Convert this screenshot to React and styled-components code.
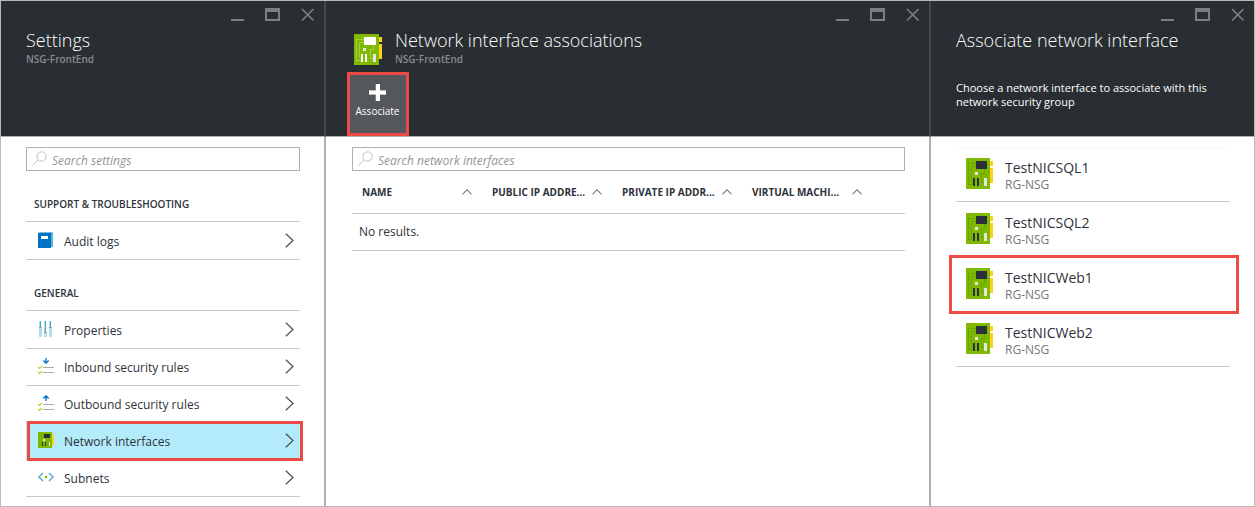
import React from "react";
import styled, { createGlobalStyle } from "styled-components";

const GlobalStyle = createGlobalStyle`
  *, *::before, *::after { box-sizing: border-box; }
  body {
    margin: 0;
    background: #fff;
    color: #2e323a;
    font-family: "Open Sans", "Noto Sans", sans-serif;
    font-size: 12px;
  }
  button, input { font: inherit; color: inherit; }
  ul, h1, h2, p { margin: 0; padding: 0; }
  ul { list-style: none; }
`;

const Portal = styled.main`
  display: grid;
  grid-template-columns: 325fr 605fr 323fr;
  min-height: 100vh;
  border: 1px solid #b8b9ba;
`;

const Blade = styled.section`
  min-width: 0;
  display: flex;
  flex-direction: column;
  border-right: ${(p) => (p.$last ? "0" : "2px solid #b0b0b0")};
`;

const BladeHeader = styled.header`
  height: 136px;
  padding-top: 7px;
  background: #292e32;
  color: #fff;
  border-bottom: 1px solid #b0b0b0;
  margin-right: ${(p) => (p.$last ? "0" : "-2px")};
  border-right: ${(p) => (p.$last ? "0" : "2px solid #42474b")};
`;

const WindowControls = styled.div`
  display: flex;
  justify-content: flex-end;
  gap: 20px;
  padding-right: 9px;
  height: 14px;
`;

const ControlButton = styled.button`
  width: 15px;
  height: 14px;
  padding: 0;
  border: 0;
  background: none;
  color: #7b7f82;
  svg { display: block; }
`;

const TitleRow = styled.div`
  display: flex;
  gap: 13px;
  margin-top: 7px;
  padding-left: ${(p) => (p.$icon ? "28px" : "25px")};
  svg { margin-top: 5px; }
`;

const Title = styled.h1`
  font-size: 18px;
  line-height: 22px;
  font-weight: 300;
  white-space: nowrap;
`;

const Subtitle = styled.p`
  height: 15px;
  font-size: 10px;
  line-height: 16px;
  font-weight: 600;
  color: #898c8e;
`;

const Description = styled.p`
  margin: 15px 40px 0 25px;
  font-size: 11px;
  line-height: 14px;
`;

const CommandButton = styled.button`
  display: flex;
  flex-direction: column;
  align-items: center;
  width: 62px;
  height: 64px;
  margin: 6px 0 0 21px;
  padding: 9px 1px 0 0;
  border: 3px solid #ed4a45;
  background: #54575c;
  font-size: 10px;
  line-height: 14px;
  color: #fff;
  gap: 3px;
`;

const BladeBody = styled.div`
  padding: 10px 24px 0 ${(p) => (p.$wide ? "26px" : "25px")};
`;

const SearchBox = styled.label`
  display: flex;
  align-items: center;
  gap: 5px;
  height: 24px;
  padding: 0 5px;
  border: 1px solid #b0b0b0;
  svg { flex: none; margin-bottom: 2px; }
`;

const SearchInput = styled.input`
  flex: 1;
  min-width: 0;
  height: 22px;
  padding: 3px 0 0;
  border: 0;
  outline: 0;
  background: none;
  font-size: 12px;
  font-style: italic;
  &::placeholder { color: #929598; opacity: 1; }
`;

const GroupTitle = styled.h2`
  height: 51px;
  padding: 25px 8px 0;
  border-bottom: 1px solid #c8c8c8;
  font-size: 10px;
  line-height: 16px;
  font-weight: 600;
`;

const SettingList = styled.ul`
  padding-top: 1px;
`;

const SettingItem = styled.li`
  position: relative;
  border-bottom: 1px solid #c8c8c8;
  background: ${(p) => (p.$selected ? "#b3ebfb" : "none")};
`;

const SettingLink = styled.a`
  display: grid;
  grid-template-columns: 16px 1fr 9px;
  align-items: center;
  column-gap: 10px;
  height: 36px;
  padding: 0 6px 2px 12px;
  color: inherit;
  text-decoration: none;
  span { padding-top: 3px; }
`;

const Highlight = styled.div`
  position: absolute;
  inset: ${(p) => p.$inset};
  border: 3px solid #ed4a45;
  pointer-events: none;
`;

const Table = styled.table`
  width: 100%;
  table-layout: fixed;
  border-collapse: collapse;
`;

const HeadCell = styled.th`
  width: ${(p) => (p.$filler ? "auto" : "130px")};
  height: 42px;
  padding: 0;
  border-bottom: 1px solid #c8c8c8;
`;

const SortButton = styled.button`
  display: flex;
  justify-content: space-between;
  align-items: center;
  width: 100%;
  padding: 0 10px;
  border: 0;
  background: none;
  font-size: 10px;
  line-height: 14px;
  font-weight: 700;
  white-space: nowrap;
`;

const EmptyCell = styled.td`
  height: 37px;
  padding: 0 7px;
  border-bottom: 1px solid #c8c8c8;
`;

const NicList = styled.ul`
  box-shadow: inset 0 1px #f7f7f7;
`;

const NicItem = styled.li`
  position: relative;
  border-bottom: 1px solid #c8c8c8;
`;

const NicButton = styled.button`
  display: flex;
  gap: 12px;
  width: 100%;
  height: 54px;
  padding: 11px 10px 0;
  border: 0;
  background: none;
  text-align: left;
`;

const NicName = styled.span`
  display: block;
  font-size: 14px;
  line-height: 19px;
`;

const NicGroup = styled.span`
  display: block;
  font-size: 12px;
  line-height: 16px;
  color: #74777b;
`;

function NicIcon({ width = 27, height = 31, chip = "#2b313a", trace = "#6ca300" }) {
  return (
    <svg width={width} height={height} viewBox="0 0 27 31" preserveAspectRatio="none" aria-hidden="true" shapeRendering="crispEdges">
      <path fill="#7fba00" d="M0 0h24v31H0z" />
      <path fill="none" stroke={trace} d="M10 5.5H2.500V26.500H7M10 8.500H5.500V23.500H7M18.500 11V15.500H15.500V24.500H18" />
      <path fill="#fcd116" d="M24 3h3v5h-3zM24 10h3v15h-3z" />
      <path fill={chip} d="M10 3h11v8H10zM7 20h2v8H7zM11 20h2v8h-2z" />
      <path fill="#e5e5e5" d="M18 20h3v8h-3zM9 14h3v3H9z" />
    </svg>
  );
}

function LogIcon() {
  return (
    <svg width="16" height="16" viewBox="0 0 16 16" aria-hidden="true">
      <path fill="#59b4d9" d="M13 1h2v14h-2z" />
      <path fill="#0072c6" d="M0 1h13v15H0z" />
      <path fill="#7fb8e2" d="M1 0h14v1H1z" />
      <path fill="#fff" d="M3 4h7v3H3z" />
    </svg>
  );
}

function PropertiesIcon() {
  return (
    <svg width="16" height="16" viewBox="0 0 16 16" aria-hidden="true" shapeRendering="crispEdges">
      <path fill="#b5dff0" d="M1 7h3v9H1zM6 12h3v4H6zM11 7h3v9h-3z" />
      <path fill="#3fa7d2" d="M2 0h1v6H2zM7 0h1v11H7zM12 0h1v6h-1z" />
      <path fill="#b9dce9" d="M1 0h1v6H1zM6 0h1v11H6zM11 0h1v6h-1z" />
      <path fill="#9b9fa2" d="M1 6h3v1H1zM6 11h3v1H6zM11 6h3v1h-3z" />
    </svg>
  );
}

function RulesIcon({ outbound }) {
  return (
    <svg width="16" height="16" viewBox="0 0 16 16" aria-hidden="true">
      <path fill="#aaacae" d="M5 9h11v1H5zM5 14h11v1H5z" />
      <path fill="none" stroke="#b8d432" strokeWidth="1.200" d="M0 9l1.500 1.500L4 8M0 14l1.500 1.500L4 13" />
      <path
        fill="none"
        stroke="#0072c6"
        strokeWidth="1.300"
        d={outbound ? "M8 6V.8M5.300 3.500 8 .8l2.700 2.700" : "M8 0v5.200M5.300 2.500 8 5.200l2.700-2.700"}
      />
    </svg>
  );
}

function SubnetIcon() {
  return (
    <svg width="16" height="16" viewBox="0 0 16 16" fill="none" aria-hidden="true">
      <path stroke="#4fa9d6" strokeWidth="1.400" d="M5 4 .9 8 5 12M11 4l4.100 4L11 12" />
      <circle cx="8" cy="8" r="1.300" fill="#7fba00" />
    </svg>
  );
}

function SearchIcon() {
  return (
    <svg width="15" height="15" viewBox="0 0 15 15" fill="none" stroke="#bdbfc0" aria-hidden="true">
      <circle cx="9.500" cy="5.500" r="4.700" />
      <path d="M6 9 .4 14.600" />
    </svg>
  );
}

function ChevronRight() {
  return (
    <svg width="9" height="15" viewBox="0 0 9 15" fill="none" stroke="#4a4d54" strokeWidth="1.200" aria-hidden="true">
      <path d="M.8.700 8 7.500.8 14.300" />
    </svg>
  );
}

function SortArrow() {
  return (
    <svg width="10" height="6" viewBox="0 0 10 6" fill="none" stroke="#7d8084" strokeWidth="1.200" aria-hidden="true">
      <path d="M.5 5.300 5 .8l4.500 4.500" />
    </svg>
  );
}

function Controls() {
  return (
    <WindowControls>
      <ControlButton aria-label="Minimize">
        <svg width="15" height="14" viewBox="0 0 15 14" fill="currentColor"><path d="M1 11h13v2H1z" /></svg>
      </ControlButton>
      <ControlButton aria-label="Maximize">
        <svg width="15" height="14" viewBox="0 0 15 14" fill="currentColor">
          <path fillRule="evenodd" d="M0 0h15v13H0zM2 4v7h11V4z" />
        </svg>
      </ControlButton>
      <ControlButton aria-label="Close">
        <svg width="15" height="14" viewBox="0 0 15 14" fill="none" stroke="currentColor" strokeWidth="1.700">
          <path d="m2 1 11.500 11.500M13.500 1 2 12.500" />
        </svg>
      </ControlButton>
    </WindowControls>
  );
}

function Search({ label }) {
  return (
    <SearchBox>
      <SearchIcon />
      <SearchInput type="text" placeholder={label} aria-label={label} />
    </SearchBox>
  );
}

function SettingGroup({ title, items }) {
  return (
    <>
      <GroupTitle>{title}</GroupTitle>
      <SettingList>
        {items.map(({ label, icon, selected }) => (
          <SettingItem key={label} $selected={selected}>
            <SettingLink href="#">
              {icon}
              <span>{label}</span>
              <ChevronRight />
            </SettingLink>
            {selected && <Highlight $inset="-2px -3px -2px 1px" />}
          </SettingItem>
        ))}
      </SettingList>
    </>
  );
}

const support = [{ label: "Audit logs", icon: <LogIcon /> }];

const general = [
  { label: "Properties", icon: <PropertiesIcon /> },
  { label: "Inbound security rules", icon: <RulesIcon /> },
  { label: "Outbound security rules", icon: <RulesIcon outbound /> },
  { label: "Network interfaces", icon: <NicIcon width={16} height={16} />, selected: true },
  { label: "Subnets", icon: <SubnetIcon /> },
];

const columns = ["NAME", "PUBLIC IP ADDRE...", "PRIVATE IP ADDR...", "VIRTUAL MACHI..."];

const nics = [
  { name: "TestNICSQL1" },
  { name: "TestNICSQL2" },
  { name: "TestNICWeb1", marked: true },
  { name: "TestNICWeb2" },
];

export default function App() {
  return (
    <>
      <GlobalStyle />
      <Portal>
        <Blade>
          <BladeHeader>
            <Controls />
            <TitleRow>
              <div>
                <Title>Settings</Title>
                <Subtitle>NSG-FrontEnd</Subtitle>
              </div>
            </TitleRow>
          </BladeHeader>
          <BladeBody>
            <Search label="Search settings" />
            <SettingGroup title="SUPPORT & TROUBLESHOOTING" items={support} />
            <SettingGroup title="GENERAL" items={general} />
          </BladeBody>
        </Blade>

        <Blade>
          <BladeHeader>
            <Controls />
            <TitleRow $icon>
              <NicIcon width={28} chip="#fff" trace="#a3cf47" />
              <div>
                <Title>Network interface associations</Title>
                <Subtitle>NSG-FrontEnd</Subtitle>
              </div>
            </TitleRow>
            <CommandButton>
              <svg width="17" height="17" viewBox="0 0 17 17" fill="#fff" aria-hidden="true">
                <path d="M6 0h5v6h6v5h-6v6H6v-6H0V6h6z" opacity=".25" />
                <path d="M7 0h4v6.500h6v4h-6V17H7v-6.500H0v-4h7z" />
              </svg>
              Associate
            </CommandButton>
          </BladeHeader>
          <BladeBody $wide>
            <Search label="Search network interfaces" />
            <Table>
              <thead>
                <tr>
                  {columns.map((column) => (
                    <HeadCell key={column} scope="col">
                      <SortButton>
                        {column}
                        <SortArrow />
                      </SortButton>
                    </HeadCell>
                  ))}
                  <HeadCell as="td" $filler />
                </tr>
              </thead>
              <tbody>
                <tr>
                  <EmptyCell colSpan={5}>No results.</EmptyCell>
                </tr>
              </tbody>
            </Table>
          </BladeBody>
        </Blade>

        <Blade $last>
          <BladeHeader $last>
            <Controls />
            <TitleRow>
              <div>
                <Title>Associate network interface</Title>
                <Subtitle />
              </div>
            </TitleRow>
            <Description>Choose a network interface to associate with this network security group</Description>
          </BladeHeader>
          <BladeBody>
            <NicList>
              {nics.map(({ name, marked }) => (
                <NicItem key={name}>
                  <NicButton>
                    <NicIcon />
                    <span>
                      <NicName>{name}</NicName>
                      <NicGroup>RG-NSG</NicGroup>
                    </span>
                  </NicButton>
                  {marked && <Highlight $inset="-2px -9px -3px -7px" />}
                </NicItem>
              ))}
            </NicList>
          </BladeBody>
        </Blade>
      </Portal>
    </>
  );
}
